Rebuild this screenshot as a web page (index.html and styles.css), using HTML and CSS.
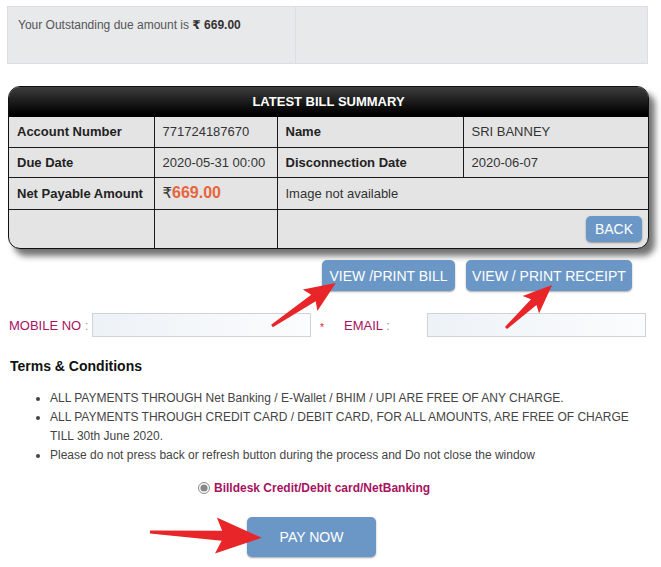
FILE: index.html
```html
<!DOCTYPE html>
<html lang="en">

<head>
    <meta charset="UTF-8">
    <meta name="viewport" content="width=device-width, initial-scale=1.0">
    <title>Bill Payment</title>
    <link rel="stylesheet" href="styles.css">
</head>

<body>
    <div class="page">
        <!-- outstanding amount -->
        <div class="due-box">
            <div class="due-text">Your Outstanding due amount is <b>&#8377; 669.00</b></div>
            <div class="due-side"></div>
        </div>

        <!-- bill summary card -->
        <div class="bill-card">
            <div class="bill-head">LATEST BILL SUMMARY</div>
            <table class="bill-table">
                <colgroup>
                    <col style="width:145px">
                    <col style="width:123px">
                    <col style="width:186px">
                    <col style="width:186px">
                </colgroup>
                <tr>
                    <th>Account Number</th>
                    <td>771724187670</td>
                    <th>Name</th>
                    <td>SRI BANNEY</td>
                </tr>
                <tr>
                    <th>Due Date</th>
                    <td>2020-05-31 00:00</td>
                    <th>Disconnection Date</th>
                    <td>2020-06-07</td>
                </tr>
                <tr class="row-amount">
                    <th>Net Payable Amount</th>
                    <td><span class="rupee">&#8377;</span><span class="amount">669.00</span></td>
                    <td colspan="2">Image not available</td>
                </tr>
                <tr class="row-back">
                    <td></td>
                    <td></td>
                    <td colspan="2" class="back-cell"><button class="btn btn-back">BACK</button></td>
                </tr>
            </table>
        </div>

        <div class="action-row">
            <button class="btn btn-action">VIEW /PRINT BILL</button>
            <button class="btn btn-action btn-receipt">VIEW / PRINT RECEIPT</button>
        </div>

        <!-- contact fields -->
        <form class="contact-row">
            <label class="field-label" for="mobile">MOBILE NO <span class="colon">:</span></label>
            <input type="text" id="mobile" class="field-input">
            <span class="required">*</span>
            <label class="field-label email-label" for="email">EMAIL <span class="colon">:</span></label>
            <input type="text" id="email" class="field-input">
        </form>

        <div class="terms">
            <h3>Terms &amp; Conditions</h3>
            <ul>
                <li>ALL PAYMENTS THROUGH Net Banking / E-Wallet / BHIM / UPI ARE FREE OF ANY CHARGE.</li>
                <li>ALL PAYMENTS THROUGH CREDIT CARD / DEBIT CARD, FOR ALL AMOUNTS, ARE FREE OF CHARGE TILL 30th June 2020.</li>
                <li>Please do not press back or refresh button during the process and Do not close the window</li>
            </ul>
        </div>

        <div class="gateway-row">
            <label class="gateway"><input type="radio" name="gateway" checked> Billdesk Credit/Debit card/NetBanking</label>
        </div>

        <div class="pay-row">
            <button class="btn btn-pay">PAY NOW</button>
        </div>

        <!-- pointer arrows -->
        <svg class="arrows" width="661" height="567" viewBox="0 0 661 567">
            <g fill="#e8262a">
                <g transform="translate(272,326) rotate(-34)">
                    <polygon points="0,-1.5 50,-4 46,-13 77,0 46,13 50,4 0,1.5" />
                </g>
                <g transform="translate(506,328) rotate(-43)">
                    <polygon points="0,-1.5 38,-4 34,-12 63,0 34,12 38,4 0,1.5" />
                </g>
                <g transform="translate(150,532) rotate(3)">
                    <polygon points="0,-1.5 72,-5 66,-18 112,0 66,18 72,5 0,1.5" />
                </g>
            </g>
        </svg>
    </div>
</body>

</html>
```

FILE: styles.css
```css
* {
    margin: 0;
    padding: 0;
    box-sizing: border-box;
    font-family: 'Liberation Sans', Arial, 'DejaVu Sans', sans-serif;
}

body {
    background: white;
    color: #333;
}

.page {
    position: relative;
    width: 661px;
    height: 567px;
    padding-top: 6px;
}

/* outstanding box */
.due-box {
    margin-left: 7px;
    width: 641px;
    height: 58px;
    display: grid;
    grid-template-columns: 288px 1fr;
    background: #e8e9eb;
    border: 1px solid #dcdee1;
}

.due-text {
    font-size: 12px;
    color: #555;
    padding: 11px 10px;
    border-right: 1px solid #dcdee2;
}

.due-text b {
    color: #333;
}

/* bill summary */
.bill-card {
    margin: 22px 0 0 8px;
    width: 641px;
    border: 1px solid #111;
    border-radius: 12px;
    overflow: hidden;
    background: #e4e4e4;
    box-shadow: 6px 7px 6px rgba(0, 0, 0, 0.55);
}

.bill-head {
    height: 30px;
    line-height: 30px;
    text-align: center;
    color: white;
    font-weight: bold;
    font-size: 13px;
    background: linear-gradient(#3d3d3d, #000 90%);
}

.bill-table {
    width: 100%;
    border-collapse: collapse;
    border-style: hidden;
    table-layout: fixed;
    font-size: 13px;
}

.bill-table th,
.bill-table td {
    border: 1px solid #1a1a1a;
    height: 30px;
    padding: 0 8px;
    text-align: left;
    vertical-align: middle;
}

.bill-table th {
    color: #222;
}

.bill-table td {
    color: #333;
}

.row-amount th,
.row-amount td {
    height: 32px;
}

.row-back td {
    height: 39px;
}

.rupee {
    font-size: 15px;
    color: #333;
}

.amount {
    font-size: 16px;
    font-weight: bold;
    color: #e8643c;
}

.back-cell {
    text-align: right !important;
}

/* buttons */
.btn {
    border: none;
    border-radius: 5px;
    background: #6b97c6;
    color: white;
    font-size: 14px;
    cursor: pointer;
    box-shadow: 0 1px 2px rgba(0, 0, 0, 0.35);
}

.btn-back {
    width: 56px;
    height: 26px;
    margin-right: -1px;
}

.action-row {
    display: flex;
    gap: 11px;
    margin: 11px 0 0 322px;
}

.btn-action {
    width: 133px;
    height: 31px;
}

.btn-receipt {
    width: 166px;
}

/* contact fields */
.contact-row {
    display: flex;
    align-items: center;
    margin: 22px 0 0 9px;
    height: 24px;
}

.field-label {
    font-size: 13px;
    color: #a8125f;
    width: 83px;
}

.colon {
    color: #999;
}

.field-input {
    width: 219px;
    height: 24px;
    border: 1px solid #cfd3d7;
    background: linear-gradient(90deg, #edf2f7, #fbfcfd);
}

.required {
    color: #e02020;
    font-size: 10px;
    margin: 4px 0 0 9px;
    width: 24px;
}

.email-label {
    width: 83px;
}

/* terms */
.terms {
    margin: 21px 0 0 10px;
}

.terms h3 {
    font-size: 14px;
    color: #111;
}

.terms ul {
    width: 630px;
    margin: 15px 0 0 0;
    padding-left: 40px;
    font-size: 12px;
    line-height: 19px;
    color: #444;
}

.gateway-row {
    margin: 16px 0 0 198px;
}

.gateway {
    font-size: 12px;
    font-weight: bold;
    color: #a8125f;
    display: flex;
    align-items: center;
    gap: 4px;
}

.gateway input {
    width: 12px;
    height: 12px;
    accent-color: #888;
}

.pay-row {
    margin: 22px 0 0 247px;
}

.btn-pay {
    width: 129px;
    height: 40px;
    font-size: 14px;
}

.arrows {
    position: absolute;
    left: 0;
    top: 0;
    pointer-events: none;
}
```
